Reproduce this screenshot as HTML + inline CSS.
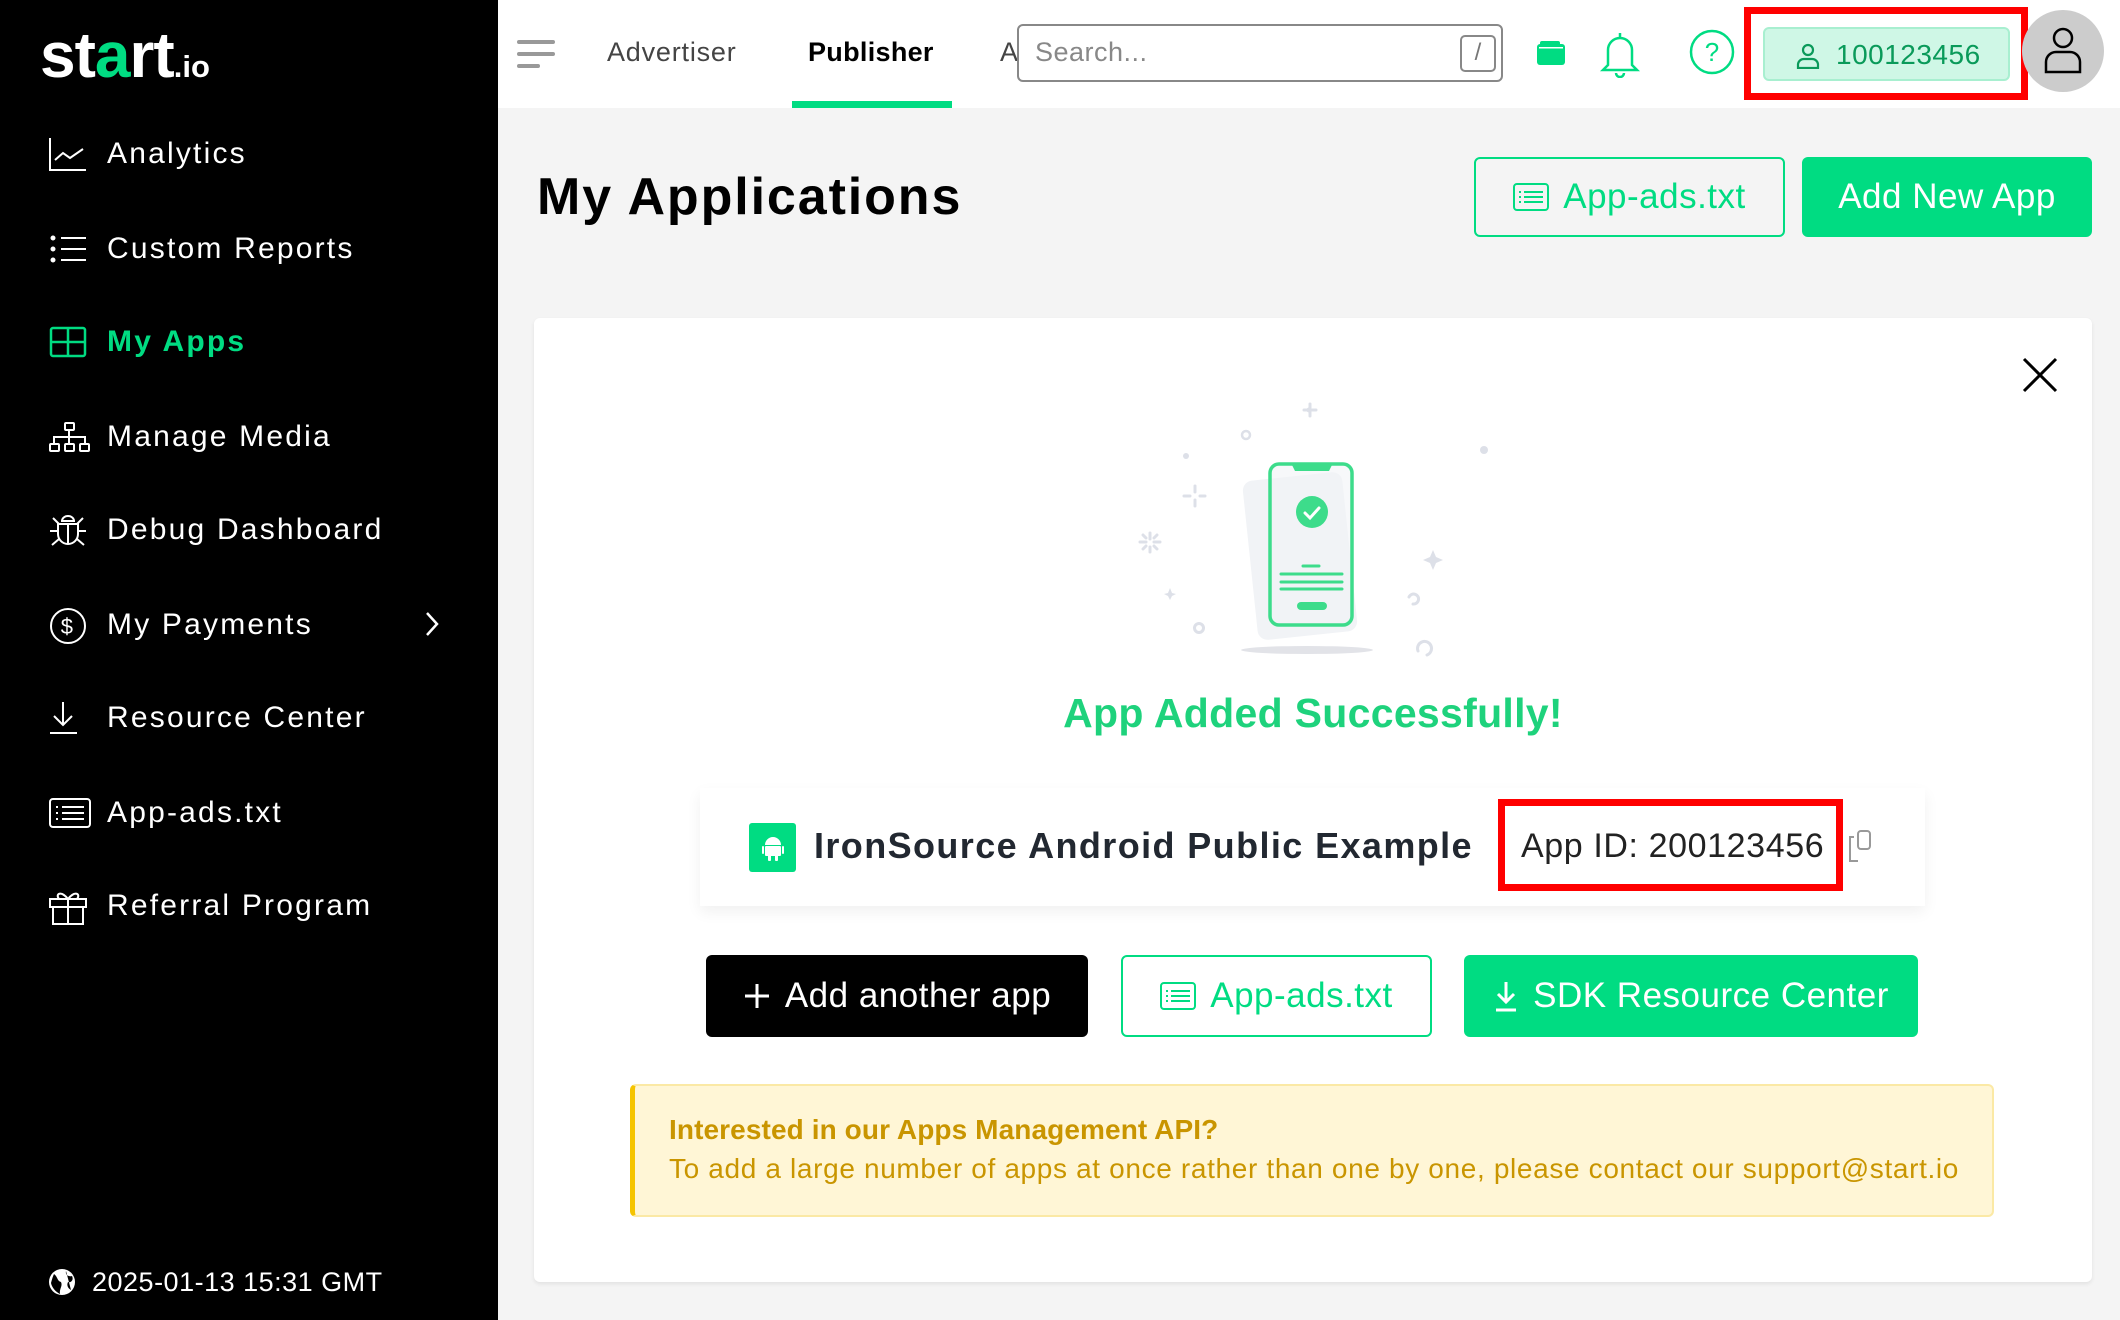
<!DOCTYPE html>
<html><head><meta charset="utf-8"><style>
*{margin:0;padding:0;box-sizing:border-box}
body{width:2120px;height:1320px;overflow:hidden;background:#f4f4f4;font-family:"Liberation Sans",sans-serif;position:relative}
.abs{position:absolute}
#side{left:0;top:0;width:498px;height:1320px;background:#000}
.nav{position:absolute;left:0;height:60px;width:498px;color:#fff;font-size:30px;letter-spacing:2.2px}
.nav svg{position:absolute;left:49px;top:12px}
.nav span{position:absolute;left:107px;top:13px}
#top{left:498px;top:0;width:1622px;height:108px;background:#fff}
.btn{position:absolute;border-radius:6px;font-size:35px;display:flex;align-items:center;justify-content:center;gap:14px;letter-spacing:0.5px}
</style></head><body>
<div id="side" class="abs">
  <div class="abs" style="left:40px;top:18px;color:#fff;font-size:64px;font-weight:bold;letter-spacing:-1px">st<span style="color:#00dc82">a</span>rt<span style="font-size:31px;letter-spacing:0">.io</span></div>

  <div class="nav" style="top:124px"><svg width="38" height="36" viewBox="0 0 38 36" fill="none" stroke="#fff" stroke-width="2"><path d="M1 2V34H37M6 24L14 17L21 22L34 13"/></svg><span>Analytics</span></div>
  <div class="nav" style="top:219px"><svg width="38" height="36" viewBox="0 0 38 36" fill="none" stroke="#fff" stroke-width="2"><circle cx="4" cy="7" r="1.5" fill="#fff"/><circle cx="4" cy="18" r="1.5" fill="#fff"/><circle cx="4" cy="29" r="1.5" fill="#fff"/><path d="M12 7H37M12 18H37M12 29H37"/></svg><span>Custom Reports</span></div>
  <div class="nav" style="top:312px;color:#00dc82;font-weight:bold"><svg width="38" height="36" viewBox="0 0 38 36" fill="none" stroke="#00dc82" stroke-width="2.5"><rect x="2" y="4" width="34" height="28" rx="2"/><path d="M19 4V32M2 18H36"/></svg><span>My Apps</span></div>
  <div class="nav" style="top:407px"><svg width="42" height="36" viewBox="0 0 42 36" fill="none" stroke="#fff" stroke-width="2"><rect x="16" y="4" width="9" height="7" rx="1"/><rect x="1" y="25" width="9" height="7" rx="1"/><rect x="16" y="25" width="9" height="7" rx="1"/><rect x="31" y="25" width="9" height="7" rx="1"/><path d="M20 11V25M5 25V18H36V25"/></svg><span>Manage Media</span></div>
  <div class="nav" style="top:500px"><svg width="38" height="36" viewBox="0 0 38 36" fill="none" stroke="#fff" stroke-width="2"><path d="M13 9A6 5 0 0 1 25 9Z"/><path d="M9 12H29V22A10 10 0 0 1 9 22Z"/><path d="M19 12V32M1 19H9M29 19H37M3 33L10 27M35 33L28 27M4 6L10 12M34 6L28 12"/></svg><span>Debug Dashboard</span></div>
  <div class="nav" style="top:595px"><svg width="38" height="38" viewBox="0 0 38 38" fill="none" stroke="#fff" stroke-width="2"><circle cx="19" cy="19" r="17"/><text x="19" y="27" font-size="22" fill="#fff" stroke="none" text-anchor="middle" font-family="Liberation Sans">$</text></svg><span>My Payments</span><svg style="left:424px;top:16px" width="16" height="26" viewBox="0 0 16 26" fill="none" stroke="#fff" stroke-width="2.5"><path d="M3 2L13 13L3 24"/></svg></div>
  <div class="nav" style="top:688px"><svg width="38" height="36" viewBox="0 0 38 36" fill="none" stroke="#fff" stroke-width="2"><path d="M14 2V24M5 16L14 25L23 16M1 33H28"/></svg><span>Resource Center</span></div>
  <div class="nav" style="top:783px"><svg width="42" height="36" viewBox="0 0 42 36" fill="none" stroke="#fff" stroke-width="2"><rect x="1" y="4" width="40" height="28" rx="3"/><path d="M13 12H35M13 18H35M13 24H35M7 12H9M7 18H9M7 24H9"/></svg><span>App-ads.txt</span></div>
  <div class="nav" style="top:876px"><svg width="38" height="38" viewBox="0 0 38 38" fill="none" stroke="#fff" stroke-width="2"><rect x="1" y="11" width="36" height="8"/><rect x="4" y="19" width="30" height="17"/><path d="M19 11V36M19 11C12 2 6 6 10 11M19 11C26 2 32 6 28 11"/></svg><span>Referral Program</span></div>

  <svg class="abs" style="left:48px;top:1268px" width="28" height="28" viewBox="0 0 28 28"><circle cx="14" cy="14" r="13" fill="#fff"/><path d="M6 6C10 9 9 13 13 14C15 18 11 21 12 26C8 24 4 20 3 15C4 11 5 8 6 6ZM18 3C17 7 21 9 24 8C26 12 23 15 20 14C18 18 21 21 23 22" fill="#000"/></svg>
  <div class="abs" style="left:92px;top:1267px;color:#fff;font-size:27px;letter-spacing:0.5px">2025-01-13 15:31 GMT</div>
</div>

<div id="top" class="abs">
  <svg class="abs" style="left:18px;top:39px" width="40" height="30" viewBox="0 0 40 30" stroke="#999" stroke-width="4" stroke-linecap="round"><path d="M3 3H37M3 15H37M3 27H22"/></svg>
  <div class="abs" style="left:109px;top:37px;font-size:27px;color:#444;letter-spacing:0.8px">Advertiser</div>
  <div class="abs" style="left:310px;top:37px;font-size:27px;color:#000;font-weight:bold;letter-spacing:0.3px">Publisher</div>
  <div class="abs" style="left:294px;top:101px;width:160px;height:7px;background:#00dc82"></div>
  <div class="abs" style="left:502px;top:37px;font-size:27px;color:#444">A</div>
  <div class="abs" style="left:519px;top:24px;width:486px;height:58px;border:2px solid #888;border-radius:6px;background:#fff">
    <div class="abs" style="left:16px;top:11px;font-size:27px;color:#888;letter-spacing:0.5px">Search...</div>
    <div class="abs" style="left:441px;top:9px;width:36px;height:37px;border:2px solid #888;border-radius:5px;font-size:24px;color:#777;text-align:center;line-height:32px">/</div>
  </div>
  <svg class="abs" style="left:1039px;top:41px" width="28" height="24" viewBox="0 0 28 24"><rect x="0" y="3" width="28" height="21" rx="3" fill="#00dc82"/><rect x="3" y="0" width="20" height="6" rx="2" fill="#00dc82"/><rect x="2" y="6" width="24" height="1.5" fill="#fff"/></svg>
  <svg class="abs" style="left:1100px;top:30px" width="44" height="48" viewBox="0 0 44 48" fill="none" stroke="#00dc82" stroke-width="2.5"><path d="M22 3V7M10 35V20A12 12 0 0 1 34 20V35L39 40H5Z M18 43A4 4 0 0 0 26 43"/></svg>
  <svg class="abs" style="left:1190px;top:28px" width="48" height="48" viewBox="0 0 48 48" fill="none" stroke="#00dc82" stroke-width="2.5"><circle cx="24" cy="24" r="21"/><text x="24" y="33" font-size="26" fill="#00dc82" stroke="none" text-anchor="middle" font-family="Liberation Sans">?</text></svg>
  <div class="abs" style="left:1246px;top:7px;width:284px;height:93px;border:7px solid #ff0000"></div>
  <div class="abs" style="left:1265px;top:27px;width:247px;height:54px;background:#cff7e6;border:2px solid #a8efd0;border-radius:6px">
    <svg class="abs" style="left:31px;top:14px" width="24" height="26" viewBox="0 0 24 26" fill="none" stroke="#0a9a5a" stroke-width="2.2"><circle cx="12" cy="7" r="5"/><path d="M2 25V21A6 6 0 0 1 8 16H16A6 6 0 0 1 22 21V25Z"/></svg>
    <div class="abs" style="left:71px;top:10px;font-size:28px;color:#0a9a5a;letter-spacing:0.5px">100123456</div>
  </div>
  <div class="abs" style="left:1524px;top:10px;width:82px;height:82px;border-radius:50%;background:#ccc">
    <svg class="abs" style="left:21px;top:16px" width="40" height="48" viewBox="0 0 40 48" fill="none" stroke="#000" stroke-width="2.5"><circle cx="20" cy="12" r="9"/><path d="M3 46V36A10 10 0 0 1 13 26H27A10 10 0 0 1 37 36V46Z"/></svg>
  </div>
</div>

<div class="abs" style="left:537px;top:167px;font-size:52px;font-weight:bold;color:#000;letter-spacing:1.9px">My Applications</div>
<div class="btn" style="left:1474px;top:157px;width:311px;height:80px;border:2px solid #00dc82;color:#00dc82;background:transparent">
  <svg width="36" height="28" viewBox="0 0 36 28" fill="none" stroke="#00dc82" stroke-width="2"><rect x="1" y="1" width="34" height="26" rx="3"/><path d="M11 9H30M11 14H30M11 19H30M6 9H8M6 14H8M6 19H8"/></svg>App-ads.txt</div>
<div class="btn" style="left:1802px;top:157px;width:290px;height:80px;background:#00dc82;color:#fff">Add New App</div>

<div class="abs" style="left:534px;top:318px;width:1558px;height:964px;background:#fff;border-radius:6px;box-shadow:0 2px 4px rgba(0,0,0,0.08)"></div>
<svg class="abs" style="left:2022px;top:357px" width="36" height="36" viewBox="0 0 36 36" stroke="#000" stroke-width="3"><path d="M2 2L34 34M34 2L2 34"/></svg>

<svg class="abs" style="left:1100px;top:380px" width="400" height="300" viewBox="0 0 400 300">
  <g fill="#dde0e8">
    <circle cx="209" cy="30" r="2.5"/><circle cx="146" cy="55" r="4" fill="none" stroke="#dde0e8" stroke-width="2.5"/><circle cx="86" cy="76" r="3"/><circle cx="384" cy="70" r="4"/>
    <circle cx="99" cy="248" r="4.5" fill="none" stroke="#dde0e8" stroke-width="3"/>
    <path d="M333 170L336 177L343 180L336 183L333 190L330 183L323 180L330 177Z"/>
    <path d="M70 208L72 213L76 214L72 216L70 220L68 216L64 214L68 213Z"/>
  </g>
  <g stroke="#dde0e8" stroke-width="3" fill="none" stroke-linecap="round">
    <path d="M95 106V112M95 120V126M84 116H90M100 116H105"/>
    <path d="M50 153V159M50 167V172M40 162H46M54 162H60M43 155L46 158M57 155L54 158M43 169L46 166M57 169L54 166"/>
    <path d="M210 24V28M210 32V36M204 30H208M212 30H216"/>
    <path d="M313 224A5 5 0 1 0 309 217"/>
    <path d="M327 275A7 7 0 1 0 318 271"/>
  </g>
  <ellipse cx="207" cy="270" rx="66" ry="4" fill="#e2e3e8"/>
  <rect x="150" y="96" width="100" height="160" rx="10" fill="#f1f3f6" transform="rotate(-6 200 176)"/>
  <rect x="170" y="84" width="82" height="161" rx="9" fill="rgba(241,243,246,0.6)" stroke="#3ddc8b" stroke-width="3.5"/>
  <path d="M192 85H232L229 91H195Z" fill="#3ddc8b"/>
  <circle cx="212" cy="132" r="16" fill="#3ddc8b"/>
  <path d="M205 133L210 138L219 128" stroke="#fff" stroke-width="3" fill="none" stroke-linecap="round"/>
  <g stroke="#3ddc8b" stroke-width="3" stroke-linecap="round"><path d="M203 186H219M181 194H242M181 202H242M181 209H242"/><path d="M201 226H223" stroke-width="8"/></g>
</svg>

<div class="abs" style="left:0;top:690px;width:2626px;text-align:center;font-size:41px;font-weight:bold;color:#1ed27c;letter-spacing:0.3px">App Added Successfully!</div>

<div class="abs" style="left:700px;top:788px;width:1225px;height:118px;background:#fff;box-shadow:0 6px 14px rgba(0,0,0,0.06)"></div>
<div class="abs" style="left:749px;top:823px;width:47px;height:49px;background:#00dc82;border-radius:3px">
  <svg class="abs" style="left:13px;top:12px" width="22" height="26" viewBox="0 0 22 26" fill="#fff"><path d="M3 10A8 8 0 0 1 19 10Z"/><rect x="3" y="11" width="16" height="10" rx="1"/><rect x="0" y="11" width="2" height="8" rx="1"/><rect x="20" y="11" width="2" height="8" rx="1"/><rect x="6" y="20" width="3" height="6" rx="1"/><rect x="13" y="20" width="3" height="6" rx="1"/></svg>
</div>
<div class="abs" style="left:814px;top:825px;font-size:36px;font-weight:bold;color:#222831;letter-spacing:1.4px">IronSource Android Public Example</div>
<div class="abs" style="left:1498px;top:799px;width:345px;height:92px;border:7px solid #ff0000"></div>
<div class="abs" style="left:1521px;top:827px;font-size:34px;color:#222;letter-spacing:0.6px">App ID: 200123456</div>
<svg class="abs" style="left:1846px;top:829px" width="34" height="34" viewBox="0 0 34 34" fill="none" stroke="#999" stroke-width="2"><rect x="12" y="2" width="12" height="18" rx="3"/><path d="M8 8H4V32H12"/></svg>

<div class="btn" style="left:706px;top:955px;width:382px;height:82px;background:#000;color:#fff">
  <svg width="28" height="28" viewBox="0 0 28 28" stroke="#fff" stroke-width="3"><path d="M14 2V26M2 14H26"/></svg>Add another app</div>
<div class="btn" style="left:1121px;top:955px;width:311px;height:82px;border:2px solid #00dc82;color:#00dc82">
  <svg width="36" height="28" viewBox="0 0 36 28" fill="none" stroke="#00dc82" stroke-width="2"><rect x="1" y="1" width="34" height="26" rx="3"/><path d="M11 9H30M11 14H30M11 19H30M6 9H8M6 14H8M6 19H8"/></svg>App-ads.txt</div>
<div class="btn" style="left:1464px;top:955px;width:454px;height:82px;background:#00dc82;color:#fff">
  <svg width="26" height="32" viewBox="0 0 26 32" fill="none" stroke="#fff" stroke-width="3"><path d="M13 2V22M5 14L13 22L21 14M3 30H23"/></svg>SDK Resource Center</div>

<div class="abs" style="left:630px;top:1084px;width:1364px;height:133px;background:#fff6d6;border:2px solid #fbe9a5;border-left:5px solid #f5c400;border-radius:6px"></div>
<div class="abs" style="left:669px;top:1114px;font-size:28px;font-weight:bold;color:#c99500;letter-spacing:0.1px">Interested in our Apps Management API?</div>
<div class="abs" style="left:669px;top:1153px;font-size:28px;color:#c99500;letter-spacing:0.65px">To add a large number of apps at once rather than one by one, please contact our support@start.io</div>
</body></html>
